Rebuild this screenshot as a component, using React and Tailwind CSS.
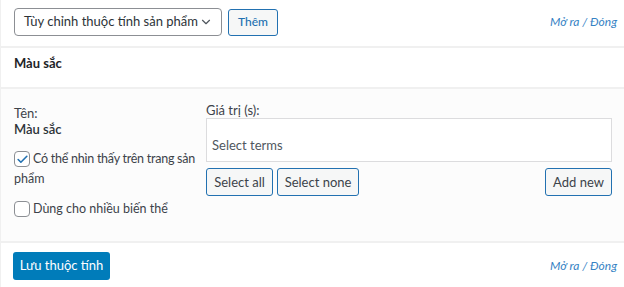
import { ChevronDown, Check } from 'lucide-react';

const FONT = { fontFamily: 'Lato, "Noto Sans", sans-serif' };

function WpButton({ children, className = '' }) {
  return (
    <button
      className={`h-[28px] rounded-[3px] border border-[#2271b1] bg-[#f6f7f7] text-[13px] text-[#3c434a] leading-none ${className}`}
    >
      {children}
    </button>
  );
}

function Checkbox({ checked }) {
  return (
    <span className="w-[16px] h-[16px] shrink-0 rounded-[4px] border border-[#8c8f94] bg-white flex items-center justify-center">
      {checked && <Check size={13} strokeWidth={3} className="text-[#2271b1]" />}
    </span>
  );
}

export default function App() {
  return (
    <div className="w-[624px] h-[287px] bg-white text-[#1d2327] text-[13px] border-l border-[#f0f0f0] overflow-hidden" style={FONT}>
      {/* toolbar */}
      <div className="h-[46px] flex items-center pl-[13px] pr-[7px] pb-[2px]">
        <div className="w-[208px] h-[28px] border border-[#8c8f94] rounded-[4px] flex items-center justify-between pl-[9px] pr-[8px]">
          <span className="text-[13px] text-[#2c3338] whitespace-nowrap">Tùy chỉnh thuộc tính sản phẩm</span>
          <ChevronDown size={14} strokeWidth={2} className="text-[#50575e]" />
        </div>
        <button className="ml-[6px] h-[27px] w-[50px] rounded-[3px] border border-[#2271b1] bg-[#f6f7f7] text-[12px] text-[#2271b1] font-medium">
          Thêm
        </button>
        <span className="ml-auto italic text-[12px] text-[#3582c4]">Mở ra / Đóng</span>
      </div>

      <div className="border-t-2 border-[#f0f0f0]" />

      {/* attribute header */}
      <div className="h-[39px] flex items-center pl-[13px] pb-[7px] font-bold text-[13px] text-[#1d2327]">Màu sắc</div>

      {/* attribute body */}
      <div className="h-[156px] bg-[#fcfcfc] border-t-2 border-b-2 border-[#f0f0f0] flex pl-[13px] pr-[12px] pt-[16px]">
        <div className="w-[187px] shrink-0 text-[#3c434a]">
          <div className="leading-[16px]">Tên:</div>
          <div className="leading-[16px] font-semibold text-[#2c3338]">Màu sắc</div>
          <div className="mt-[12px] flex items-center gap-[3px] leading-[20px]">
            <Checkbox checked />
            <span className="whitespace-nowrap text-[12.5px] tracking-[-0.25px]">Có thể nhìn thấy trên trang sản</span>
          </div>
          <div className="leading-[20px] text-[12.5px]">phẩm</div>
          <div className="mt-[12px] flex items-center gap-[3px]">
            <Checkbox />
            <span className="leading-[16px] text-[12.5px]">Dùng cho nhiều biến thể</span>
          </div>
        </div>
        <div className="flex-1 ml-[5px] -mt-[3px]">
          <div className="leading-[16px] text-[#3c434a]">Giá trị (s):</div>
          <div className="h-[44px] border border-[#dcdcde] bg-white flex items-end pl-[5px] pb-[6px] text-[#50575e]">
            Select terms
          </div>
          <div className="mt-[6px] flex gap-[4px]">
            <WpButton className="w-[67px]">Select all</WpButton>
            <WpButton className="w-[82px]">Select none</WpButton>
            <WpButton className="ml-auto w-[67px]">Add new</WpButton>
          </div>
        </div>
      </div>

      {/* footer */}
      <div className="h-[45px] flex items-center pl-[12px] pr-[7px]">
        <button className="h-[28px] w-[97px] rounded-[3px] bg-[#007cba] text-white text-[13px]">Lưu thuộc tính</button>
        <span className="ml-auto italic text-[12px] text-[#3582c4]">Mở ra / Đóng</span>
      </div>
    </div>
  );
}
